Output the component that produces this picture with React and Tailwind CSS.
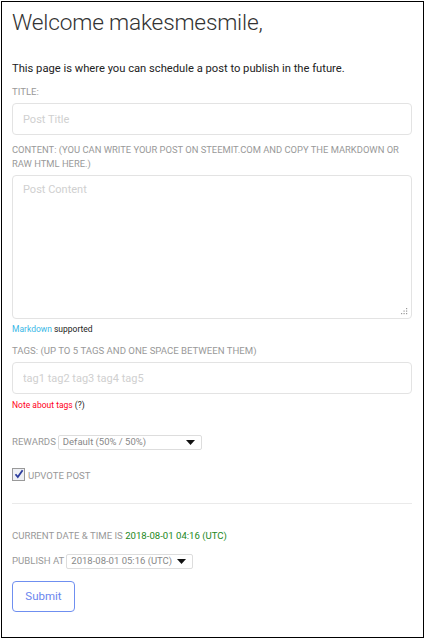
import React from "react";

const Caret = () => (
  <svg width="9" height="5" viewBox="0 0 9 5" className="shrink-0">
    <path d="M0 0h9L4.5 5z" fill="#111" />
  </svg>
);

const Grip = () => (
  <svg width="7" height="7" viewBox="0 0 7 7" className="absolute right-[4px] bottom-[4px]">
    <rect x="5" y="0" width="1.2" height="1.2" fill="#999" />
    <rect x="2.5" y="2.5" width="1.2" height="1.2" fill="#999" />
    <rect x="5" y="2.5" width="1.2" height="1.2" fill="#999" />
    <rect x="0" y="5" width="1.2" height="1.2" fill="#999" />
    <rect x="2.5" y="5" width="1.2" height="1.2" fill="#999" />
    <rect x="5" y="5" width="1.2" height="1.2" fill="#999" />
  </svg>
);

const App = () => {
  return (
    <div className="w-[425px] h-[639px] p-px bg-white font-['Roboto',sans-serif]">
      <div className="h-[637px] w-[423px] border border-black px-[10px]">
        <h1 className="mt-[7px] text-[22.7px] leading-[28px] font-light tracking-[-0.2px] text-[#333]">
          Welcome makesmesmile,
        </h1>

        <p className="mt-[25px] text-[11.2px] leading-[14px] text-[#222]">
          This page is where you can schedule a post to publish in the future.
        </p>

        <label className="block mt-[10px] text-[9.6px] leading-[12px] text-[#999] uppercase">
          Title:
        </label>
        <input
          type="text"
          placeholder="Post Title"
          className="mt-[5px] block w-[400px] h-[32px] rounded-[4px] border border-[#e3e3e3] px-[10px] text-[11px] placeholder:text-[#d0d0d0] outline-none"
        />

        <label className="block mt-[8px] text-[9.4px] leading-[14px] text-[#999] uppercase">
          Content: (You can write your post on steemit.com and copy the
          markdown or raw HTML here.)
        </label>
        <div className="relative mt-[4px] w-[400px] h-[144px]">
          <textarea
            placeholder="Post Content"
            className="block w-full h-full rounded-[4px] border border-[#e3e3e3] px-[10px] py-[7px] text-[11px] leading-[14px] placeholder:text-[#d0d0d0] outline-none resize-none"
          />
          <Grip />
        </div>
        <p className="mt-[4px] text-[8.5px] leading-[12px] text-[#222]">
          <span className="text-[#3bb8e6]">Markdown</span> supported
        </p>

        <label className="block mt-[9px] text-[9.6px] leading-[14px] text-[#999] uppercase">
          Tags: (up to 5 tags and one space between them)
        </label>
        <input
          type="text"
          placeholder="tag1 tag2 tag3 tag4 tag5"
          className="mt-[4px] block w-[400px] h-[32px] rounded-[4px] border border-[#e3e3e3] px-[10px] text-[11px] placeholder:text-[#d0d0d0] outline-none"
        />
        <p className="mt-[5px] text-[8.5px] leading-[12px] text-[#222]">
          <span className="text-[#ff0022]">Note about tags</span> (?)
        </p>

        <div className="mt-[23px] h-[16px] flex items-center gap-[2px] text-[9.6px] text-[#999] uppercase">
          <span>Rewards</span>
          <div className="flex items-center justify-between w-[144px] h-[15px] border border-[#ddd] rounded-[2px] pl-[4px] pr-[6px] normal-case text-[9.5px] text-[#888] whitespace-nowrap">
            <span>Default (50% / 50%)</span>
            <Caret />
          </div>
        </div>

        <div className="mt-[17px] h-[14px] flex items-center gap-[3px]">
          <span className="flex items-center justify-center w-[13px] h-[13px] border border-[#999] bg-[#eef0f5]">
            <svg width="10" height="10" viewBox="0 0 10 10">
              <path d="M1.5 5.2 L3.8 8 L8.6 1.2" stroke="#2d3d9e" strokeWidth="1.8" fill="none" />
            </svg>
          </span>
          <span className="mt-[5px] text-[9.6px] text-[#999] uppercase">Upvote post</span>
        </div>

        <hr className="mt-[22px] w-[400px] border-0 border-t border-[#eaeaea]" />

        <p className="mt-[25px] text-[9.6px] leading-[14px] text-[#999] uppercase">
          Current date &amp; time is{" "}
          <span className="text-[#228822]">2018-08-01 04:16 (UTC)</span>
        </p>

        <div className="mt-[10px] h-[16px] flex items-center gap-[2px] text-[9.6px] text-[#999] uppercase whitespace-nowrap">
          <span>Publish at</span>
          <div className="flex items-center justify-between w-[127px] h-[15px] border border-[#ddd] rounded-[2px] pl-[4px] pr-[6px] text-[9.5px] text-[#888]">
            <span>2018-08-01 05:16 (UTC)</span>
            <Caret />
          </div>
        </div>

        <button className="mt-[12px] block w-[63px] h-[31px] rounded-[4px] border border-[#6f8ff0] text-[11.5px] text-[#6a86ee]">
          Submit
        </button>
      </div>
    </div>
  );
};

export default App;
